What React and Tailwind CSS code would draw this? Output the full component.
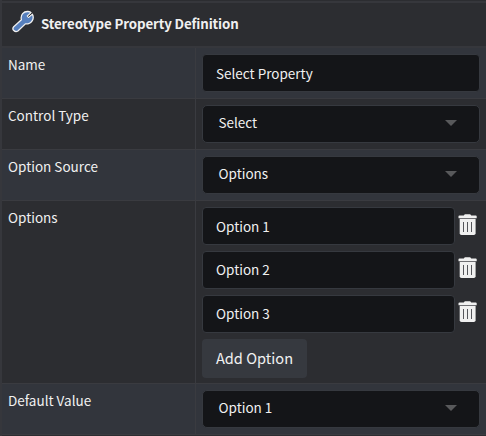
function Wrench() {
  return (
    <svg width="24" height="24" viewBox="0 0 24 24" className="relative -top-[3px] shrink-0">
      <path
        d="M2.7 17.8 L10.4 10.8 C9.2 5.8 12.7 2.2 17 2.5 Q19.3 2.7 20 3.6 L16.4 7 L17.6 8.3 L21.3 5.2 C23.8 9.5 20.7 15.2 14.4 14.9 L6.9 22 C3.9 23.8 .4 20.4 2.7 17.8Z"
        fill="#567fbd"
        stroke="#f1f1f1"
        strokeWidth="1.3"
        strokeLinejoin="round"
      />
      <path d="M20.9 4.3L17.2 7.6" stroke="#2c2d31" strokeWidth="1" />
    </svg>
  );
}

function Trash() {
  return (
    <svg width="20" height="22" viewBox="0 0 20 22" className="shrink-0" fill="#f0f0f0">
      <path d="M.5 2.3Q.5 1.5 1.5 1.5H5.8L6.8 .3H12.2L13.2 1.5H17.7Q18.7 1.5 18.7 2.3V4.3H.5Z" />
      <path d="M1.5 4.3H17.5V5H1.5Z" fill="#77787b" />
      <path d="M1.7 5H17.6V19.2Q17.6 21 15.8 21H3.5Q1.7 21 1.7 19.2Z" />
      <path d="M5 8H6V18H5ZM9 8H10V18H9ZM13 8H14V18H13Z" fill="#55565b" />
    </svg>
  );
}

function TextBox({ value, raised }) {
  return (
    <div className={`flex h-[38px] min-w-0 flex-1 items-center rounded-[4px] border border-[#36393f] bg-[#141518] px-[13px] ${raised ? "pb-[2px]" : "pb-px"}`}>
      {value}
    </div>
  );
}

function Select({ value }) {
  return (
    <div className="flex h-[38px] flex-1 items-center justify-between rounded-[5px] border border-[#36393f] bg-[#141518] pb-[2px] pl-[15.5px] pr-[22px]">
      <span className="pb-[2px]">{value}</span>
      <svg width="12" height="6" viewBox="0 0 12 6">
        <path d="M0 0H12L6 6Z" fill="#58595b" />
      </svg>
    </div>
  );
}

function Row({ label, shaded, height, children }) {
  return (
    <div className={`flex border-b border-[#3a3b40] ${height} ${shaded ? "bg-[#32353c]" : "bg-[#2c2d31]"}`}>
      <div className="w-[194px] shrink-0 border-r border-[#3a3b40] pl-[6px] pt-[6px] leading-[20px]">{label}</div>
      <div className="flex flex-1 flex-col gap-[6px] pl-[6px] pr-[6px] pt-[6px]">{children}</div>
    </div>
  );
}

export default function App() {
  return (
    <div className="h-[436px] w-[486px] overflow-hidden border-l-2 border-[#36373c] bg-[#2c2d31] pt-px font-['Noto_Sans_CJK_SC','Noto_Sans',sans-serif] text-[13.5px] leading-[20px] text-[#f0f0f0]">
      <div className="flex h-[47px] items-center border-y-2 border-[#36373c] pb-[2px] pl-[9px]">
        <Wrench />
        <span className="ml-[6px] text-[13.3px] font-bold tracking-[-0.12px]">Stereotype Property Definition</span>
      </div>
      <Row label="Name" shaded height="h-[51px]">
        <div className="flex"><TextBox value="Select Property" /></div>
      </Row>
      <Row label="Control Type" height="h-[51px]">
        <div className="flex"><Select value="Select" /></div>
      </Row>
      <Row label="Option Source" shaded height="h-[51px]">
        <div className="flex"><Select value="Options" /></div>
      </Row>
      <Row label="Options" height="h-[183px]">
        {["Option 1", "Option 2", "Option 3"].map((option, index) => (
          <div key={option} className="flex gap-[3px]">
            <TextBox value={option} raised={index > 0} />
            <div className={`w-[22px] ${index === 0 ? "pt-[7px]" : "pt-[6px]"}`}><Trash /></div>
          </div>
        ))}
        <button className="h-[39px] w-[105px] rounded-[4px] bg-[#36393f] pb-px text-[14.6px]">Add Option</button>
      </Row>
      <Row label="Default Value" shaded height="h-[51px]">
        <div className="flex"><Select value="Option 1" /></div>
      </Row>
    </div>
  );
}
